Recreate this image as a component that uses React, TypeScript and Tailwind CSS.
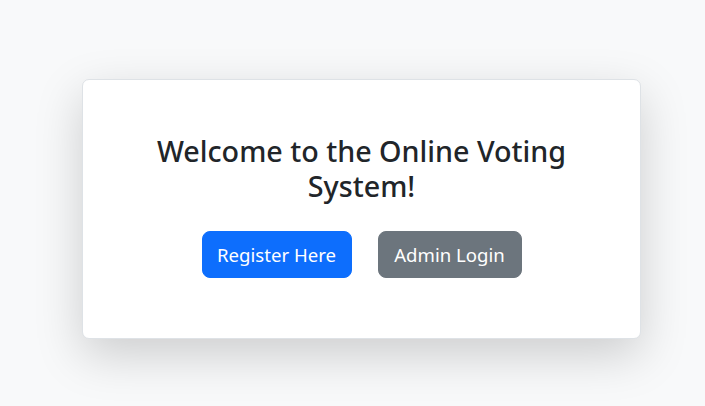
export default function App() {
  return (
    <div className="min-h-[406px] w-full bg-[#f8f9fa] pt-[79px]" style={{ fontFamily: '"Noto Sans", "Open Sans", sans-serif' }}>
      <div className="ml-[82px] w-[559px] rounded-[7px] border border-[#dee2e6] bg-white px-[40px] pt-[53px] pb-[60px] text-center shadow-[0_16px_48px_rgba(0,0,0,0.175)]">
        <h2 className="text-[28.7px] font-medium leading-[35px] text-[#212529]">
          Welcome to the Online Voting
          <br />
          System!
        </h2>
        <div className="mt-[28px] flex justify-center gap-[26px]">
          <button className="h-[47px] w-[150px] rounded-[8px] border border-[#0d6efd] bg-[#0d6efd] text-[18.6px] text-white">
            Register Here
          </button>
          <button className="h-[47px] w-[144px] rounded-[8px] border border-[#6c757d] bg-[#6c757d] text-[18.6px] text-white">
            Admin Login
          </button>
        </div>
      </div>
    </div>
  );
}
